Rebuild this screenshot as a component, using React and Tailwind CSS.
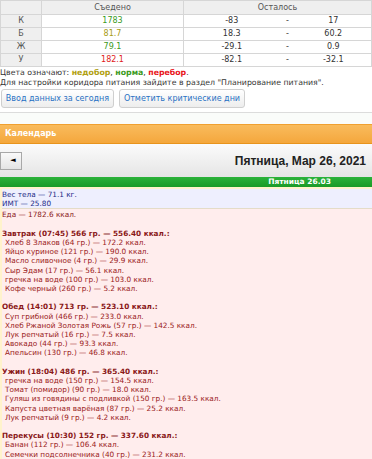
export default function App() {
  const rows = [
    { k: "К", e: "1783", ec: "text-[#3a9a1c]", a: "-83", b: "17" },
    { k: "Б", e: "81.7", ec: "text-[#a89c12]", a: "18.3", b: "60.2" },
    { k: "Ж", e: "79.1", ec: "text-[#3a9a1c]", a: "-29.1", b: "0.9" },
    { k: "У", e: "182.1", ec: "text-[#e01a1a]", a: "-82.1", b: "-32.1" },
  ];
  const meals = [
    {
      h: "Завтрак (07:45) 566 гр. — 556.40 ккал.:",
      items: [
        "Хлеб 8 Злаков (64 гр.) — 172.2 ккал.",
        "Яйцо куриное (121 гр.) — 190.0 ккал.",
        "Масло сливочное (4 гр.) — 29.9 ккал.",
        "Сыр Эдам (17 гр.) — 56.1 ккал.",
        "гречка на воде (100 гр.) — 103.0 ккал.",
        "Кофе черный (260 гр.) — 5.2 ккал.",
      ],
    },
    {
      h: "Обед (14:01) 713 гр. — 523.10 ккал.:",
      items: [
        "Суп грибной (466 гр.) — 233.0 ккал.",
        "Хлеб Ржаной Золотая Рожь (57 гр.) — 142.5 ккал.",
        "Лук репчатый (16 гр.) — 7.5 ккал.",
        "Авокадо (44 гр.) — 93.3 ккал.",
        "Апельсин (130 гр.) — 46.8 ккал.",
      ],
    },
    {
      h: "Ужин (18:04) 486 гр. — 365.40 ккал.:",
      items: [
        "гречка на воде (150 гр.) — 154.5 ккал.",
        "Томат (помидор) (90 гр.) — 18.0 ккал.",
        "Гуляш из говядины с подливкой (150 гр.) — 163.5 ккал.",
        "Капуста цветная варёная (87 гр.) — 25.2 ккал.",
        "Лук репчатый (9 гр.) — 4.2 ккал.",
      ],
    },
    {
      h: "Перекусы (10:30) 152 гр. — 337.60 ккал.:",
      items: [
        "Банан (112 гр.) — 106.4 ккал.",
        "Семечки подсолнечника (40 гр.) — 231.2 ккал.",
      ],
    },
  ];
  return (
    <div className="w-[372px] h-[459px] overflow-hidden bg-white font-['DejaVu_Sans',sans-serif]">
      <table className="w-[371px] table-fixed border-collapse text-[8px] text-[#555]">
        <colgroup>
          <col className="w-[41px]" />
          <col className="w-[142px]" />
          <col className="w-[96px]" />
          <col className="w-[16px]" />
          <col className="w-[76px]" />
        </colgroup>
        <thead>
          <tr className="h-[14px] bg-[#efefef]">
            <th className="border border-[#d6d6d6] font-normal"></th>
            <th className="border border-[#d6d6d6] font-normal">Съедено</th>
            <th colSpan={3} className="border border-[#d6d6d6] font-normal">Осталось</th>
          </tr>
        </thead>
        <tbody>
          {rows.map((r) => (
            <tr key={r.k} className="h-[13px]">
              <td className="border border-[#d6d6d6] bg-[#efefef] text-center">{r.k}</td>
              <td className={"border border-[#d6d6d6] text-center " + r.ec}>{r.e}</td>
              <td className="border-y border-l border-[#d6d6d6] text-center text-[#333]">{r.a}</td>
              <td className="border-y border-[#d6d6d6] text-center text-[#333]">-</td>
              <td className="border-y border-r border-[#d6d6d6] text-center text-[#333]">{r.b}</td>
            </tr>
          ))}
        </tbody>
      </table>
      <div className="text-[7.8px] leading-[10px] text-[#333] pt-[1px]">
        <div>
          Цвета означают: <b className="text-[#b0a010]">недобор</b>,{" "}
          <b className="text-[#3a9a1c]">норма</b>,{" "}
          <b className="text-[#e8141a]">перебор</b>.
        </div>
        <div>Для настройки коридора питания зайдите в раздел "Планирование питания".</div>
      </div>
      <div className="flex gap-[5px] pl-[1px] pt-[1px]">
        <button className="h-[19px] w-[113px] rounded-[3px] border border-[#cfcfcf] bg-linear-to-b from-white to-[#ededed] text-[8px] text-[#2a72c4]">
          Ввод данных за сегодня
        </button>
        <button className="h-[19px] w-[126px] rounded-[3px] border border-[#cfcfcf] bg-linear-to-b from-white to-[#ededed] text-[8px] text-[#2a72c4]">
          Отметить критические дни
        </button>
      </div>
      <div className="mt-[4px] h-[12px] border-t border-[#dcdcdc] bg-[#fafcfa]"></div>
      <div className="h-[20px] flex items-center pl-[5px] border-t border-[#f0a030] border-b border-b-[#e8941c] bg-linear-to-b from-[#f9bb5c] to-[#f4a73c] text-[8px] font-bold text-white">
        Календарь
      </div>
      <div className="h-[33px] flex items-center justify-between pr-[6px] bg-linear-to-b from-[#fbfbfb] to-[#e5e5e5]">
        <button className="h-[18px] w-[22px] flex items-center justify-center border border-[#a8a8a8] bg-linear-to-b from-[#fafafa] to-[#e4e4e4] text-[7px] text-black pl-[4px]">
          ◄
        </button>
        <div className="font-['Liberation_Sans',Arial,sans-serif] text-[12px] font-bold text-[#222]">
          Пятница, Мар 26, 2021
        </div>
      </div>
      <div className="h-[10px] flex items-center justify-end pr-[41px] bg-linear-to-b from-[#2bb23a] to-[#1a9a27] text-[7.5px] leading-[10px] font-bold text-white">
        Пятница 26.03
      </div>
      <div className="bg-[#fff3cc] pl-[2px] pt-[2px]">
        <div className="bg-[#eeeffe] border-b border-[#e4dcc8] pt-[1px] text-[7.3px] leading-[9.2px] text-[#1c2a86]">
          <div>Вес тела — 71.1 кг.</div>
          <div>ИМТ — 25.80</div>
        </div>
        <div className="bg-[#ffeded] pt-[1px] h-[260px] text-[7.3px] leading-[9.2px] text-[#9a2020]">
          <div className="text-[#8a1818]">Еда — 1782.6 ккал.</div>
          {meals.map((m) => (
            <div key={m.h}>
              <div className="h-[9.2px]"></div>
              <div className="font-bold text-[#8a1818]">{m.h}</div>
              {m.items.map((it) => (
                <div key={it} className="pl-[3px]">{it}</div>
              ))}
            </div>
          ))}
        </div>
      </div>
    </div>
  );
}
